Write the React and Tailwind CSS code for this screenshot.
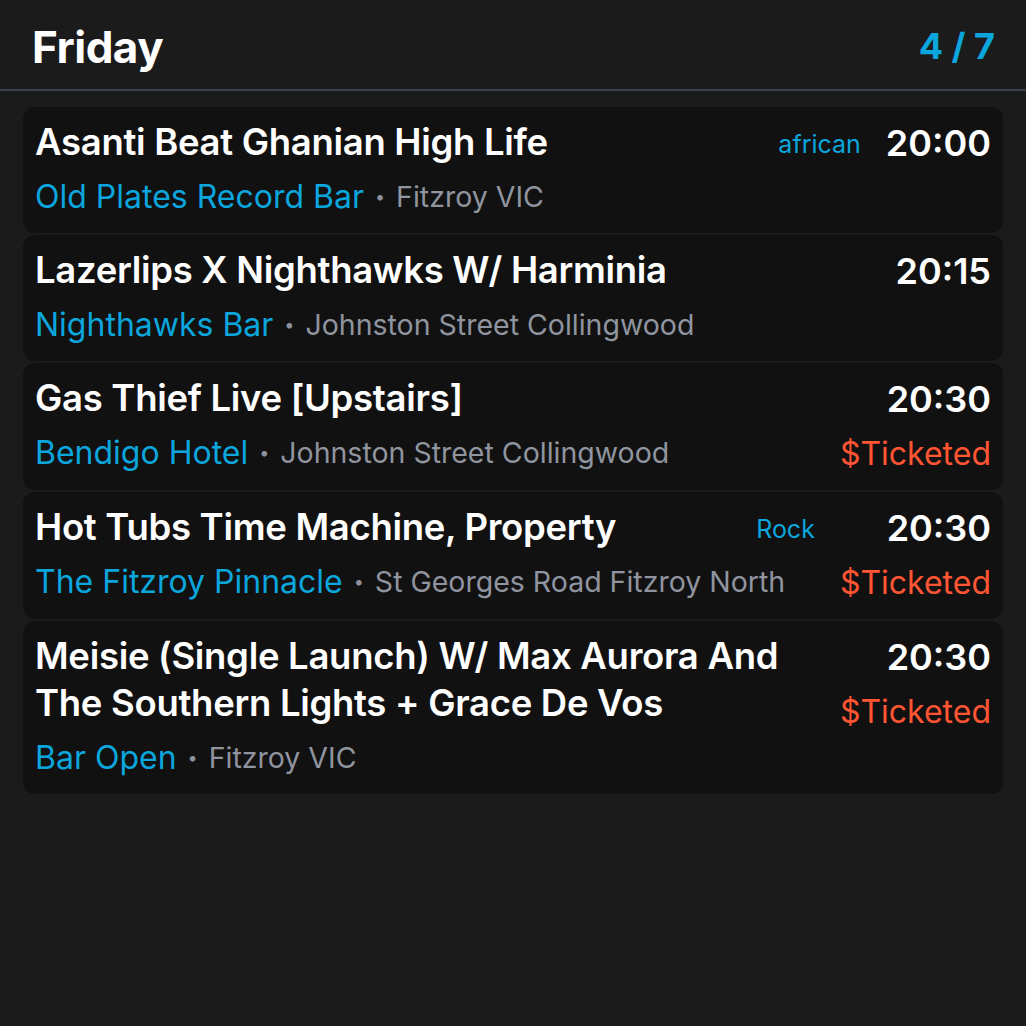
const events = [
  {
    title: "Asanti Beat Ghanian High Life",
    venue: "Old Plates Record Bar",
    location: "Fitzroy VIC",
    genre: "african",
    time: "20:00",
    ticketed: false,
  },
  {
    title: "Lazerlips X Nighthawks W/ Harminia",
    venue: "Nighthawks Bar",
    location: "Johnston Street Collingwood",
    time: "20:15",
    ticketed: false,
  },
  {
    title: "Gas Thief Live [Upstairs]",
    venue: "Bendigo Hotel",
    location: "Johnston Street Collingwood",
    time: "20:30",
    ticketed: true,
  },
  {
    title: "Hot Tubs Time Machine, Property",
    venue: "The Fitzroy Pinnacle",
    location: "St Georges Road Fitzroy North",
    genre: "Rock",
    time: "20:30",
    ticketed: true,
  },
  {
    title: "Meisie (Single Launch) W/ Max Aurora And The Southern Lights + Grace De Vos",
    venue: "Bar Open",
    location: "Fitzroy VIC",
    time: "20:30",
    ticketed: true,
  },
];

const EventCard = ({ event }) => {
  return (
    <div className="flex rounded-xl bg-[#111111] px-3 pt-3 pb-4">
      <div className="flex-1 min-w-0">
        <div className="flex items-start justify-between gap-4">
          <h2 className="text-[36.5px] leading-[47px] font-semibold text-white tracking-[-0.3px]">
            {event.title}
          </h2>
          {event.genre && (
            <span className="shrink-0 text-[25px] leading-[44px] pt-[3px] text-[#0ba6dd]">
              {event.genre}
            </span>
          )}
        </div>
        <div className="mt-[11px] flex items-center leading-[40px] whitespace-nowrap">
          <span className="text-[32px] text-[#0ba6dd]">{event.venue}</span>
          <span className="mx-[11px] text-[18px] text-[#8c919b]">•</span>
          <span className="text-[28.5px] text-[#8f949f]">{event.location}</span>
        </div>
      </div>
      <div className="ml-[25px] flex flex-col items-end shrink-0">
        <span className="text-[36px] leading-[45px] pt-[2px] font-semibold text-white">
          {event.time}
        </span>
        {event.ticketed && (
          <span className="mt-[12px] text-[32px] leading-[40px] text-[#ff5533]">
            $Ticketed
          </span>
        )}
      </div>
    </div>
  );
};

export default function App() {
  return (
    <div
      className="min-h-screen w-full bg-[#1b1b1b]"
      style={{ fontFamily: "Inter, 'Noto Sans', sans-serif" }}
    >
      <header className="flex h-[91px] items-center justify-between border-b-2 border-[#3a404c] pl-8 pr-[31px]">
        <h1 className="text-[44px] font-bold text-white tracking-[-0.5px] pt-[4px]">Friday</h1>
        <span className="text-[36px] font-bold text-[#0ba6dd] pt-[2px]">4 / 7</span>
      </header>
      <section className="mt-4 flex flex-col gap-[2px] px-[23px]">
        {events.map((event, i) => (
          <EventCard key={i} event={event} />
        ))}
      </section>
    </div>
  );
}
